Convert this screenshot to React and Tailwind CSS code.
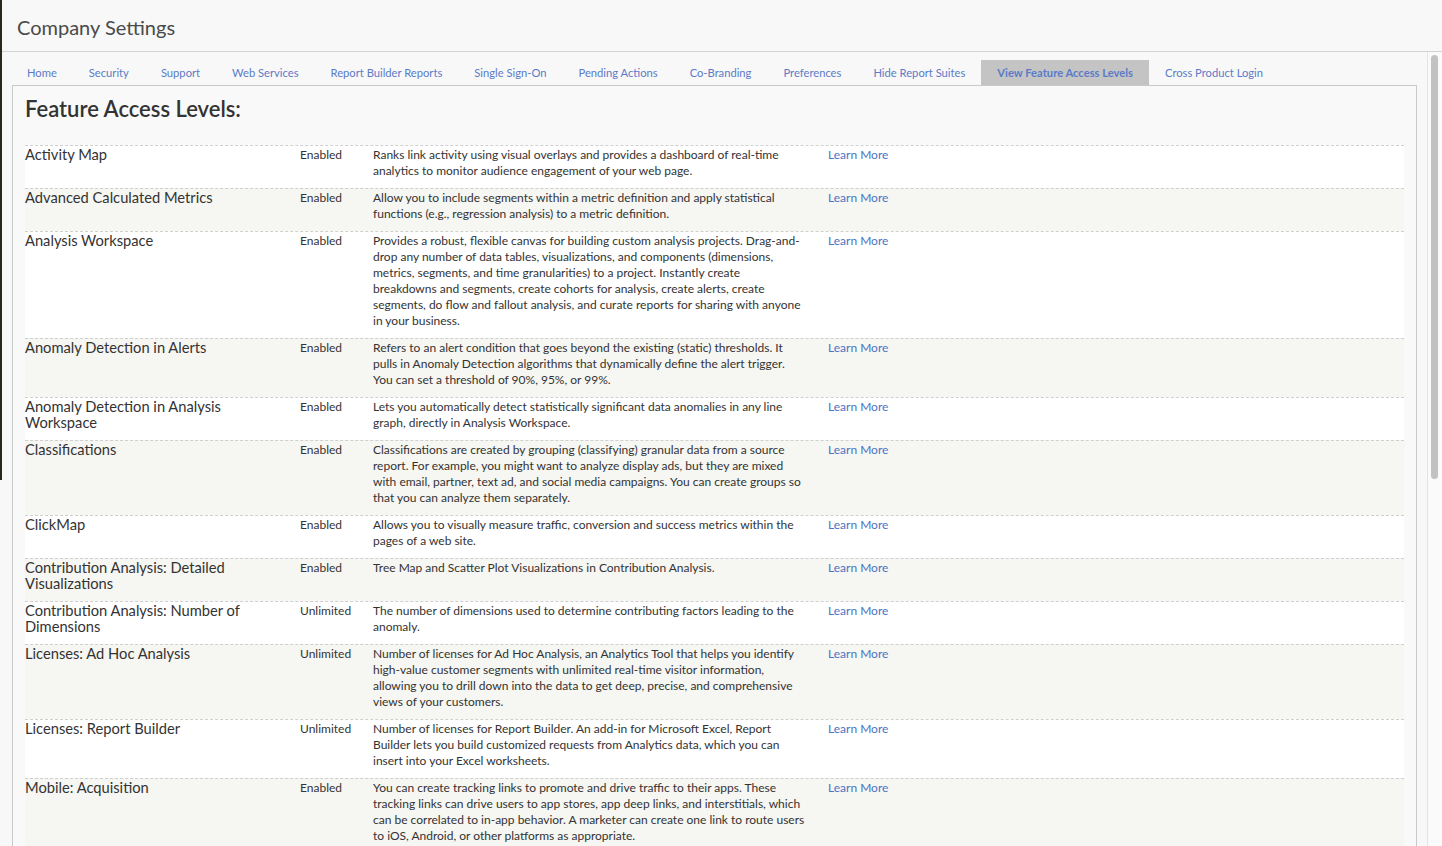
import React from "react";

const tabs = [
  "Home",
  "Security",
  "Support",
  "Web Services",
  "Report Builder Reports",
  "Single Sign-On",
  "Pending Actions",
  "Co-Branding",
  "Preferences",
  "Hide Report Suites",
  "View Feature Access Levels",
  "Cross Product Login",
];

const rows = [
  {
    name: ["Activity Map"],
    status: "Enabled",
    desc: [
      "Ranks link activity using visual overlays and provides a dashboard of real-time",
      "analytics to monitor audience engagement of your web page.",
    ],
  },
  {
    name: ["Advanced Calculated Metrics"],
    status: "Enabled",
    desc: [
      "Allow you to include segments within a metric definition and apply statistical",
      "functions (e.g., regression analysis) to a metric definition.",
    ],
  },
  {
    name: ["Analysis Workspace"],
    status: "Enabled",
    desc: [
      "Provides a robust, flexible canvas for building custom analysis projects. Drag-and-",
      "drop any number of data tables, visualizations, and components (dimensions,",
      "metrics, segments, and time granularities) to a project. Instantly create",
      "breakdowns and segments, create cohorts for analysis, create alerts, create",
      "segments, do flow and fallout analysis, and curate reports for sharing with anyone",
      "in your business.",
    ],
  },
  {
    name: ["Anomaly Detection in Alerts"],
    status: "Enabled",
    desc: [
      "Refers to an alert condition that goes beyond the existing (static) thresholds. It",
      "pulls in Anomaly Detection algorithms that dynamically define the alert trigger.",
      "You can set a threshold of 90%, 95%, or 99%.",
    ],
  },
  {
    name: ["Anomaly Detection in Analysis", "Workspace"],
    status: "Enabled",
    desc: [
      "Lets you automatically detect statistically significant data anomalies in any line",
      "graph, directly in Analysis Workspace.",
    ],
  },
  {
    name: ["Classifications"],
    status: "Enabled",
    desc: [
      "Classifications are created by grouping (classifying) granular data from a source",
      "report. For example, you might want to analyze display ads, but they are mixed",
      "with email, partner, text ad, and social media campaigns. You can create groups so",
      "that you can analyze them separately.",
    ],
  },
  {
    name: ["ClickMap"],
    status: "Enabled",
    desc: [
      "Allows you to visually measure traffic, conversion and success metrics within the",
      "pages of a web site.",
    ],
  },
  {
    name: ["Contribution Analysis: Detailed", "Visualizations"],
    status: "Enabled",
    desc: ["Tree Map and Scatter Plot Visualizations in Contribution Analysis."],
  },
  {
    name: ["Contribution Analysis: Number of", "Dimensions"],
    status: "Unlimited",
    desc: [
      "The number of dimensions used to determine contributing factors leading to the",
      "anomaly.",
    ],
  },
  {
    name: ["Licenses: Ad Hoc Analysis"],
    status: "Unlimited",
    desc: [
      "Number of licenses for Ad Hoc Analysis, an Analytics Tool that helps you identify",
      "high-value customer segments with unlimited real-time visitor information,",
      "allowing you to drill down into the data to get deep, precise, and comprehensive",
      "views of your customers.",
    ],
  },
  {
    name: ["Licenses: Report Builder"],
    status: "Unlimited",
    desc: [
      "Number of licenses for Report Builder. An add-in for Microsoft Excel, Report",
      "Builder lets you build customized requests from Analytics data, which you can",
      "insert into your Excel worksheets.",
    ],
  },
  {
    name: ["Mobile: Acquisition"],
    status: "Enabled",
    desc: [
      "You can create tracking links to promote and drive traffic to their apps. These",
      "tracking links can drive users to app stores, app deep links, and interstitials, which",
      "can be correlated to in-app behavior. A marketer can create one link to route users",
      "to iOS, Android, or other platforms as appropriate.",
    ],
  },
];

export default function App() {
  return (
    <div
      className="relative h-[846px] w-[1442px] overflow-hidden bg-[#f8f8f8] text-[#333333]"
      style={{ fontFamily: "Lato, 'Noto Sans', 'Liberation Sans', sans-serif" }}
    >
      <div className="absolute left-0 top-0 h-[480px] w-[2px] bg-[#2b2620]" />
      {/* Header */}
      <div className="flex h-[52px] items-start border-b border-[#d3d3d3] pl-[17px] pt-[12px]">
        <h1 className="text-[20px] font-normal leading-[30px] text-[#4a4a4a]">
          Company Settings
        </h1>
      </div>

      <div className="flex h-[794px]">
        {/* Main */}
        <div className="flex-1 overflow-hidden">
          {/* Tabs */}
          <div className="flex pl-[11px] pt-[8px]">
            {tabs.map((t) => {
              const active = t === "View Feature Access Levels";
              return (
                <div
                  key={t}
                  className={
                    active
                      ? "h-[25px] bg-[#c4c4c4] px-[16px] text-[11.2px] font-bold leading-[26px] text-[#5b7bc7]"
                      : "h-[25px] px-[16px] text-[11.2px] leading-[26px] text-[#5b7bc7]"
                  }
                >
                  {t}
                </div>
              );
            })}
          </div>

          {/* Panel */}
          <div className="ml-[12px] mr-[10px] border border-[#c9c9c9] bg-[#f9f9f9] px-[12px] pt-[9px]">
            <h2 className="mb-[22px] text-[22px] font-semibold leading-[28px] text-[#333333]">
              Feature Access Levels:
            </h2>
            <div>
              {rows.map((r, i) => (
                <div
                  key={i}
                  className={
                    (i % 2 === 0 ? "bg-white " : "bg-[#f6f6f2] ") +
                    "grid grid-cols-[275px_73px_455px_1fr] border-t border-dashed border-[#cfcfcf] pb-[9px] pt-[1px]"
                  }
                >
                  <div className="relative -top-[1px] whitespace-nowrap text-[14.7px] leading-[16px] text-[#333333]">
                    {r.name.map((n, j) => (
                      <div key={j}>{n}</div>
                    ))}
                  </div>
                  <div className="text-[12px] leading-[16px] text-[#333333]">
                    {r.status}
                  </div>
                  <div className="whitespace-nowrap text-[12px] leading-[16px] text-[#333333]">
                    {r.desc.map((d, j) => (
                      <div key={j}>{d}</div>
                    ))}
                  </div>
                  <div className="text-[12px] leading-[16px] text-[#4b73c4]">
                    Learn More
                  </div>
                </div>
              ))}
            </div>
          </div>
        </div>

        {/* Scrollbar */}
        <div className="w-[15px] border-l border-[#e4e4e4] bg-[#fafafa] pl-[3px] pt-[3px]">
          <div className="h-[424px] w-[7px] rounded-full bg-[#c2c2c2]" />
        </div>
      </div>
    </div>
  );
}
